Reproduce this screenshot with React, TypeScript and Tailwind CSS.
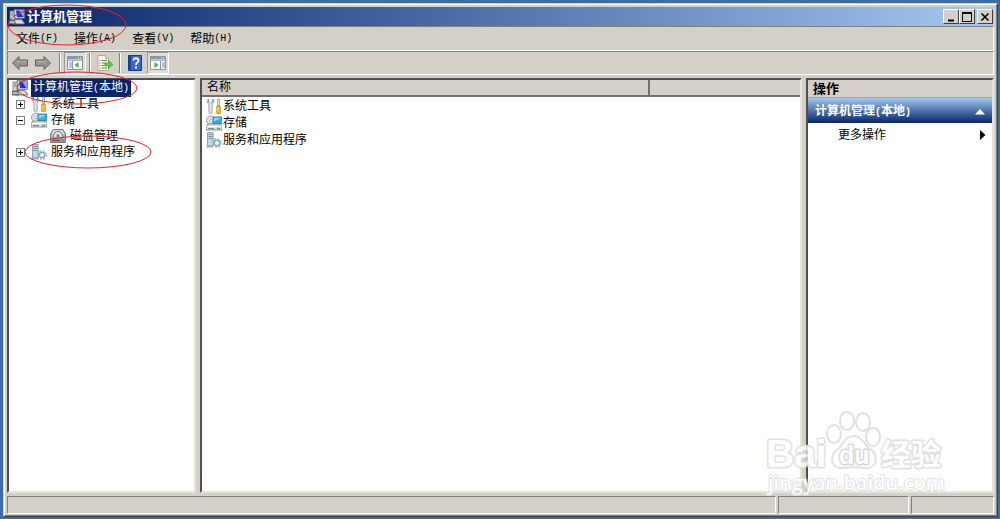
import type { ReactNode } from 'react';

const ETCH = 'border-t-[#808080] border-l-[#808080] border-b-white border-r-white';
const SUNKEN = 'border-2 border-t-[#505050] border-l-[#505050] border-b-[#e8e4dc] border-r-[#e8e4dc]';

type IconName = 'computer' | 'tools' | 'storage' | 'disk' | 'services';

function ComputerIcon() {
  return (
    <svg viewBox="0 0 16 16" className="size-4 shrink-0" aria-hidden="true">
      <path d="M1 2h4l1 9H1z" fill="#ddd8cd" stroke="#707780" strokeWidth=".8" />
      <path d="M2 4h2M2 6h3" stroke="#777" />
      <path d="M5 .5h10.500v9H6z" fill="#d9dde5" stroke="#5a6472" strokeWidth=".7" />
      <path d="M7 1.500h7.500v6.800H8z" fill="#1c32d2" />
      <path d="M10 1.500h4.500v6.800z" fill="#8ea5ff" />
      <path d="M4 10.500h9l3 4.500H3z" fill="#c9c8c2" stroke="#666c74" strokeWidth=".8" />
      <path d="M0 11.500h6l1 3.500H0z" fill="#8f9aa5" stroke="#3f464e" strokeWidth=".7" />
      <path d="M6 12h6M6.500 13.500h7M1 13h4" stroke="#f4f4f4" strokeWidth=".7" />
    </svg>
  );
}

function ToolsIcon() {
  return (
    <svg viewBox="0 0 16 16" className="size-4 shrink-0" aria-hidden="true">
      <path
        d="M2.500 1C.8 2 .8 4.500 2 5.600l1 .9V14c0 2 3 2 3 0V6.500l1-.9C8.300 4.500 8.200 2 6.500 1v3.200H5.700L5.300 5h-1L3.300 4.200H2.500z"
        fill="#e9ebed"
        stroke="#7d858c"
        strokeWidth=".8"
      />
      <path d="M11.500 1h2v5l-.5 2h-1l-.5-2z" fill="#e3e6e8" stroke="#8b9299" strokeWidth=".7" />
      <path d="M11 8h3l.6 2-.7 1 .7 1.500v2q0 1-1 1h-2.200q-1 0-1-1v-2l.7-1.500-.7-1z" fill="#f3b01c" stroke="#c17c08" strokeWidth=".7" />
      <path d="M12 9v5" stroke="#ffe28a" />
    </svg>
  );
}

function StorageIcon() {
  return (
    <svg viewBox="0 0 16 16" className="size-4 shrink-0" aria-hidden="true">
      <circle cx="5" cy="5.500" r="4.500" fill="#dfe3e6" stroke="#87919a" strokeWidth=".8" />
      <circle cx="5" cy="5.500" r="1.400" fill="#fff" stroke="#87919a" strokeWidth=".6" />
      <path d="M7 2h9v6.500H7z" fill="#36aee0" stroke="#3a7894" strokeWidth=".8" />
      <path d="M8 3h7L8 6.500z" fill="#8edcf7" />
      <path d="M2 9h12l2 2.500v3.500H0v-3.500z" fill="#dcdfe1" stroke="#69737b" strokeWidth=".8" />
      <path d="M.8 11.500h14.400" stroke="#fff" />
      <path d="M2 13.500h6" stroke="#7e878e" />
      <path d="M11 13.500h3" stroke="#37c838" strokeWidth="1.600" />
    </svg>
  );
}

function DiskIcon() {
  return (
    <svg viewBox="0 0 16 16" className="size-4 shrink-0" aria-hidden="true">
      <path d="M3 1.500h10l2.500 4.500v8.500H.5V6z" fill="#b9bcbe" stroke="#6d7275" strokeWidth=".9" />
      <path d="M3.500 2.300h9L14 6H2z" fill="#dcdedf" />
      <path d="M4 6.500a4 3 0 0 1 8 0l1 3.500H3z" fill="#e6e8e9" stroke="#606568" strokeWidth=".8" />
      <path d="M6.500 6.500h3V9h-3z" fill="#7b8083" />
      <path d="M1 10.500h14v3.500H1z" fill="#94999c" />
      <path d="M2 12.500h8" stroke="#53585b" />
      <path d="M12 12.500h2" stroke="#d5503f" />
    </svg>
  );
}

function ServicesIcon() {
  return (
    <svg viewBox="0 0 16 16" className="size-4 shrink-0" aria-hidden="true">
      <path d="M1.500.5h5.700v13.500H1.500z" fill="#c8d6dd" stroke="#7f929d" strokeWidth=".8" />
      <path d="M2.500 2.500h4M2.500 4.500h4M2.500 6.500h4" stroke="#738894" strokeWidth=".9" />
      <path d="M.5 14h7v1.500h-7z" fill="#9aabb5" />
      <circle cx="11" cy="11" r="4.200" fill="none" stroke="#8fb0ca" strokeWidth="1.400" strokeDasharray="1.800 1.500" />
      <circle cx="11" cy="11" r="2.700" fill="#eef6fc" stroke="#86acca" strokeWidth="1.500" />
    </svg>
  );
}

const ICONS: Record<IconName, () => ReactNode> = {
  computer: ComputerIcon,
  tools: ToolsIcon,
  storage: StorageIcon,
  disk: DiskIcon,
  services: ServicesIcon,
};

const LIST_ITEMS: { icon: IconName; label: string }[] = [
  { icon: 'tools', label: '系统工具' },
  { icon: 'storage', label: '存储' },
  { icon: 'services', label: '服务和应用程序' },
];

const MENUS = [
  { label: '文件', hotkey: 'F' },
  { label: '操作', hotkey: 'A' },
  { label: '查看', hotkey: 'V' },
  { label: '帮助', hotkey: 'H' },
];

function Half({ children }: { children: ReactNode }) {
  return <span className="font-['Liberation_Mono',monospace] text-[10px]">{children}</span>;
}

function CaptionButton({ label, children }: { label: string; children: ReactNode }) {
  return (
    <button
      aria-label={label}
      className="flex h-[15px] w-4 items-center justify-center border border-t-white border-l-white border-b-[#404040] border-r-[#404040] bg-[#d4d0c8]"
    >
      <svg viewBox="0 0 12 12" className="size-3 shrink-0" fill="none" stroke="#000">
        {children}
      </svg>
    </button>
  );
}

function TitleBar() {
  return (
    <header className="flex h-[19px] items-center bg-linear-to-r from-[#0a246a] to-[#a6caf0] pl-[2px] pr-px">
      <ComputerIcon />
      <h1 className="ml-[2px] flex-1 text-[13px] leading-4 font-bold text-white">计算机管理</h1>
      <div className="flex">
        <CaptionButton label="最小化">
          <path d="M3 9.500h6" strokeWidth="2" />
        </CaptionButton>
        <CaptionButton label="最大化">
          <path d="M1.500 2v8.500h9V2" />
          <path d="M1 2h10" strokeWidth="2" />
        </CaptionButton>
        <div className="ml-[2px] flex">
          <CaptionButton label="关闭">
            <path d="M2.500 2.500l7 7M9.500 2.500l-7 7" strokeWidth="1.600" />
          </CaptionButton>
        </div>
      </div>
    </header>
  );
}

function MenuBar() {
  return (
    <nav className={`flex h-[25px] items-center gap-4 border pl-2 ${ETCH}`}>
      {MENUS.map((menu) => (
        <button key={menu.label} className="flex items-center leading-4">
          {menu.label}
          <Half>({menu.hotkey})</Half>
        </button>
      ))}
    </nav>
  );
}

function ArrowIcon({ forward = false }: { forward?: boolean }) {
  return (
    <svg viewBox="0 0 16 16" className="size-4" aria-hidden="true">
      <path
        d={forward ? 'M15.500 8L9 1.500V5H.5v6H9v3.500z' : 'M.5 8L7 1.500V5h8.500v6H7v3.500z'}
        fill="#969696"
        stroke="#606060"
      />
      <path d={forward ? 'M2 6.500h8.500' : 'M5.500 6.500H14'} stroke="#b9b9b9" />
    </svg>
  );
}

function PaneIcon({ right = false }: { right?: boolean }) {
  return (
    <svg viewBox="0 0 16 16" className="size-4" aria-hidden="true">
      <path d="M.5 1.500h15v13H.5z" fill="#f7f8fa" stroke="#8a93a1" />
      <path d="M1 2h14v2.500H1z" fill="#8797b0" />
      <path d="M11 3h1M13 3h1" stroke="#fff" />
      <path d="M1 5.500h14" stroke="#aeb6c2" />
      <path d={right ? 'M10.500 6v8' : 'M5.500 6v8'} stroke="#8e98a8" />
      <path d={right ? 'M12 8h3M12 10h3M12 12h3' : 'M2 8h3M2 10h3M2 12h3'} stroke="#7f93b4" />
      <path d={right ? 'M4.500 7v6l4-3z' : 'M11.500 7v6l-4-3z'} fill="#3cba3c" />
    </svg>
  );
}

function ToolSeparator() {
  return <span className="h-5 w-[2px] border-l border-l-[#808080] border-r border-r-white" />;
}

function ToolBar() {
  const pressed =
    'flex h-[22px] w-[22px] items-center justify-center border border-t-[#9a9a9a] border-l-[#9a9a9a] border-b-white border-r-white bg-[#e0ddd7]';
  return (
    <div role="toolbar" className={`flex h-6 items-center border pl-1 ${ETCH}`}>
      <button aria-label="后退">
        <ArrowIcon />
      </button>
      <button aria-label="前进" className="ml-[7px]">
        <ArrowIcon forward />
      </button>
      <div className="ml-2 flex items-center gap-[3px]">
        <ToolSeparator />
        <button aria-label="显示/隐藏控制台树" aria-pressed="true" className={pressed}>
          <PaneIcon />
        </button>
        <ToolSeparator />
      </div>
      <button aria-label="导出列表" className="mx-[6px]">
        <svg viewBox="0 0 16 16" className="size-4" aria-hidden="true">
          <path d="M1 .5h7.500l3 3v12H1z" fill="#fffbe5" stroke="#b5b198" />
          <path d="M8.500.5v3h3" fill="#e7dfb4" stroke="#b5b198" />
          <path d="M5 5.500h5M5 8h4M5 10.500h4M5 13h5M2.500 5.500h1M2.500 8h1M2.500 10.500h1M2.500 13h1" stroke="#717171" />
          <path d="M8 8h3.500V5.500L16 9.500l-4.500 4V11H8z" fill="#54cf3f" stroke="#2aa52a" strokeWidth=".6" />
        </svg>
      </button>
      <ToolSeparator />
      <button aria-label="帮助" className="mr-[5px] ml-[7px]">
        <svg viewBox="0 0 14 16" className="h-4 w-[14px]" aria-hidden="true">
          <path d="M.5.5h13v15H.5z" fill="#3a66d4" stroke="#1c3a8c" />
          <path d="M1 1h2v14H1z" fill="#1f3f9f" />
          <path d="M5.500 5.500c0-3 5-3 5 0 0 2-2.500 2-2.500 4.500" fill="none" stroke="#fff" strokeWidth="1.800" />
          <path d="M7 11.500h2v2H7z" fill="#fff" />
        </svg>
      </button>
      <button aria-label="显示/隐藏操作窗格" aria-pressed="true" className={pressed}>
        <PaneIcon right />
      </button>
    </div>
  );
}

function Expander({ open = false }: { open?: boolean }) {
  return (
    <button aria-label={open ? '折叠' : '展开'} className="flex size-[9px] shrink-0">
      <svg viewBox="0 0 9 9" className="size-[9px]" shapeRendering="crispEdges">
        <path d="M.5.5h8v8h-8z" fill="#fff" stroke="#808080" />
        <path d={open ? 'M2 4.500h5' : 'M2 4.500h5M4.500 2v5'} stroke="#000" />
      </svg>
    </button>
  );
}

function TreeRow({ icon, children }: { icon: IconName; children: ReactNode }) {
  const Icon = ICONS[icon];
  return (
    <div className="flex h-4 items-center gap-1 leading-4">
      <Icon />
      {children}
    </div>
  );
}

function TreePane() {
  return (
    <aside className={`w-[189px] shrink-0 bg-white ${SUNKEN}`}>
      <div className="flex flex-col pl-[3px]">
        <TreeRow icon="computer">
          <span className="-ml-px bg-[#0a246a] px-[2px] text-white">
            计算机管理<Half>(</Half>本地<Half>)</Half>
          </span>
        </TreeRow>
        <div className="flex items-center gap-[6px] pl-1">
          <Expander />
          <TreeRow icon="tools">系统工具</TreeRow>
        </div>
        <div className="flex items-center gap-[6px] pl-1">
          <Expander open />
          <TreeRow icon="storage">存储</TreeRow>
        </div>
        <div className="pl-[38px]">
          <TreeRow icon="disk">磁盘管理</TreeRow>
        </div>
        <div className="flex items-center gap-[6px] pl-1">
          <Expander />
          <TreeRow icon="services">服务和应用程序</TreeRow>
        </div>
      </div>
    </aside>
  );
}

function ListPane() {
  return (
    <main className={`min-w-0 flex-1 bg-white ${SUNKEN}`}>
      <table className="w-full table-fixed border-collapse">
        <thead>
          <tr className="h-[15px] border-b-2 border-b-[#707070] bg-[#d4d0c8]">
            <th scope="col" className="w-[447px] border-r-2 border-r-[#707070] p-0 pl-[5px] text-left leading-[15px] font-normal">
              名称
            </th>
            <td className="p-0" />
          </tr>
        </thead>
        <tbody>
          {LIST_ITEMS.map((item) => {
            const Icon = ICONS[item.icon];
            return (
              <tr key={item.label} className="h-[17px]">
                <td colSpan={2} className="p-0">
                  <span className="flex h-[17px] items-center gap-px pl-1 leading-4">
                    <Icon />
                    {item.label}
                  </span>
                </td>
              </tr>
            );
          })}
        </tbody>
      </table>
    </main>
  );
}

function ActionsPane() {
  return (
    <aside className={`w-[188px] shrink-0 bg-white ${SUNKEN}`}>
      <h2 className="h-[18px] border-b border-b-[#a8a49c] bg-[#d4d0c8] pl-[5px] text-[13px] leading-[17px] font-bold">操作</h2>
      <button className="flex h-[25px] w-full items-center justify-between bg-linear-to-b from-[#a6caf0] to-[#0a246a] pt-[2px] pr-[7px] pl-[7px] font-bold text-white">
        <span>
          计算机管理<Half>(</Half>本地<Half>)</Half>
        </span>
        <svg viewBox="0 0 10 6" className="h-[6px] w-[10px]" fill="#fff">
          <path d="M5 0l5 5.500H0z" />
        </svg>
      </button>
      <button className="flex h-6 w-full items-center justify-between pr-[6px] pl-[30px]">
        更多操作
        <svg viewBox="0 0 6 10" className="h-[10px] w-[6px]">
          <path d="M0 0l5.500 5L0 10z" />
        </svg>
      </button>
    </aside>
  );
}

function StatusBar() {
  return (
    <footer className="mt-[3px] flex h-[18px] gap-[2px]">
      <div className={`flex-1 border ${ETCH}`} />
      <div className={`w-[131px] border ${ETCH}`} />
      <div className={`w-[83px] border ${ETCH}`} />
    </footer>
  );
}

// Hand-drawn red marks around the title, the tree root and the services node
function Annotations() {
  return (
    <svg className="pointer-events-none absolute top-0 left-0 h-[180px] w-[160px]" fill="none" stroke="#e8202c" aria-hidden="true">
      <ellipse cx="67" cy="25" rx="59" ry="20" />
      <ellipse cx="77" cy="88" rx="60" ry="16" />
      <ellipse cx="88" cy="152" rx="63" ry="16" />
    </svg>
  );
}

function Watermark() {
  return (
    <svg
      className="pointer-events-none absolute right-[50px] bottom-[20px] h-[90px] w-[185px] opacity-85"
      viewBox="0 0 185 90"
      fill="#fff"
      stroke="#dcdcdc"
      strokeWidth="2"
      strokeLinejoin="round"
    >
      <ellipse cx="69" cy="25" rx="7" ry="9" />
      <ellipse cx="82" cy="12" rx="7" ry="9" />
      <ellipse cx="98" cy="13" rx="7" ry="9" />
      <ellipse cx="108" cy="28" rx="7" ry="9" />
      <path d="M89 27c-9 0-10 7-15 12-12 9-7 21 4 20 8-1 14-1 22 0 11 1 16-11 4-20-6-5-7-12-15-12z" />
      <g fontFamily="Liberation Sans, Noto Sans CJK SC, sans-serif" fontWeight="700" strokeWidth="3" paintOrder="stroke">
        <text x="1" y="58" fontSize="39">Bai</text>
        <text x="74" y="55" fontSize="25" stroke="#d2d2d2">du</text>
        <text x="116" y="56" fontSize="30">经验</text>
        <text x="3" y="81" fontSize="20" fontFamily="Open Sans, sans-serif" fontWeight="600" strokeWidth="2">
          jingyan.baidu.com
        </text>
      </g>
    </svg>
  );
}

export default function App() {
  return (
    <div className="relative flex h-screen flex-col bg-[#3a6ea5] pt-[3px] pr-[2px] pb-[2px] pl-[3px] font-['Liberation_Sans','Noto_Sans_CJK_SC',sans-serif] text-xs text-black">
      <div className="flex min-h-0 flex-1 flex-col border border-t-[#d4d0c8] border-l-[#d4d0c8] border-b-[#404040] border-r-[#404040] bg-[#d4d0c8]">
        <div className="flex min-h-0 flex-1 flex-col border border-t-white border-l-white border-b-[#808080] border-r-[#808080] px-[2px] pt-[2px] pb-px">
          <TitleBar />
          <MenuBar />
          <ToolBar />
          <div className="mt-[3px] flex min-h-0 flex-1 gap-1">
            <TreePane />
            <ListPane />
            <ActionsPane />
          </div>
          <StatusBar />
        </div>
      </div>
      <Annotations />
      <Watermark />
    </div>
  );
}
